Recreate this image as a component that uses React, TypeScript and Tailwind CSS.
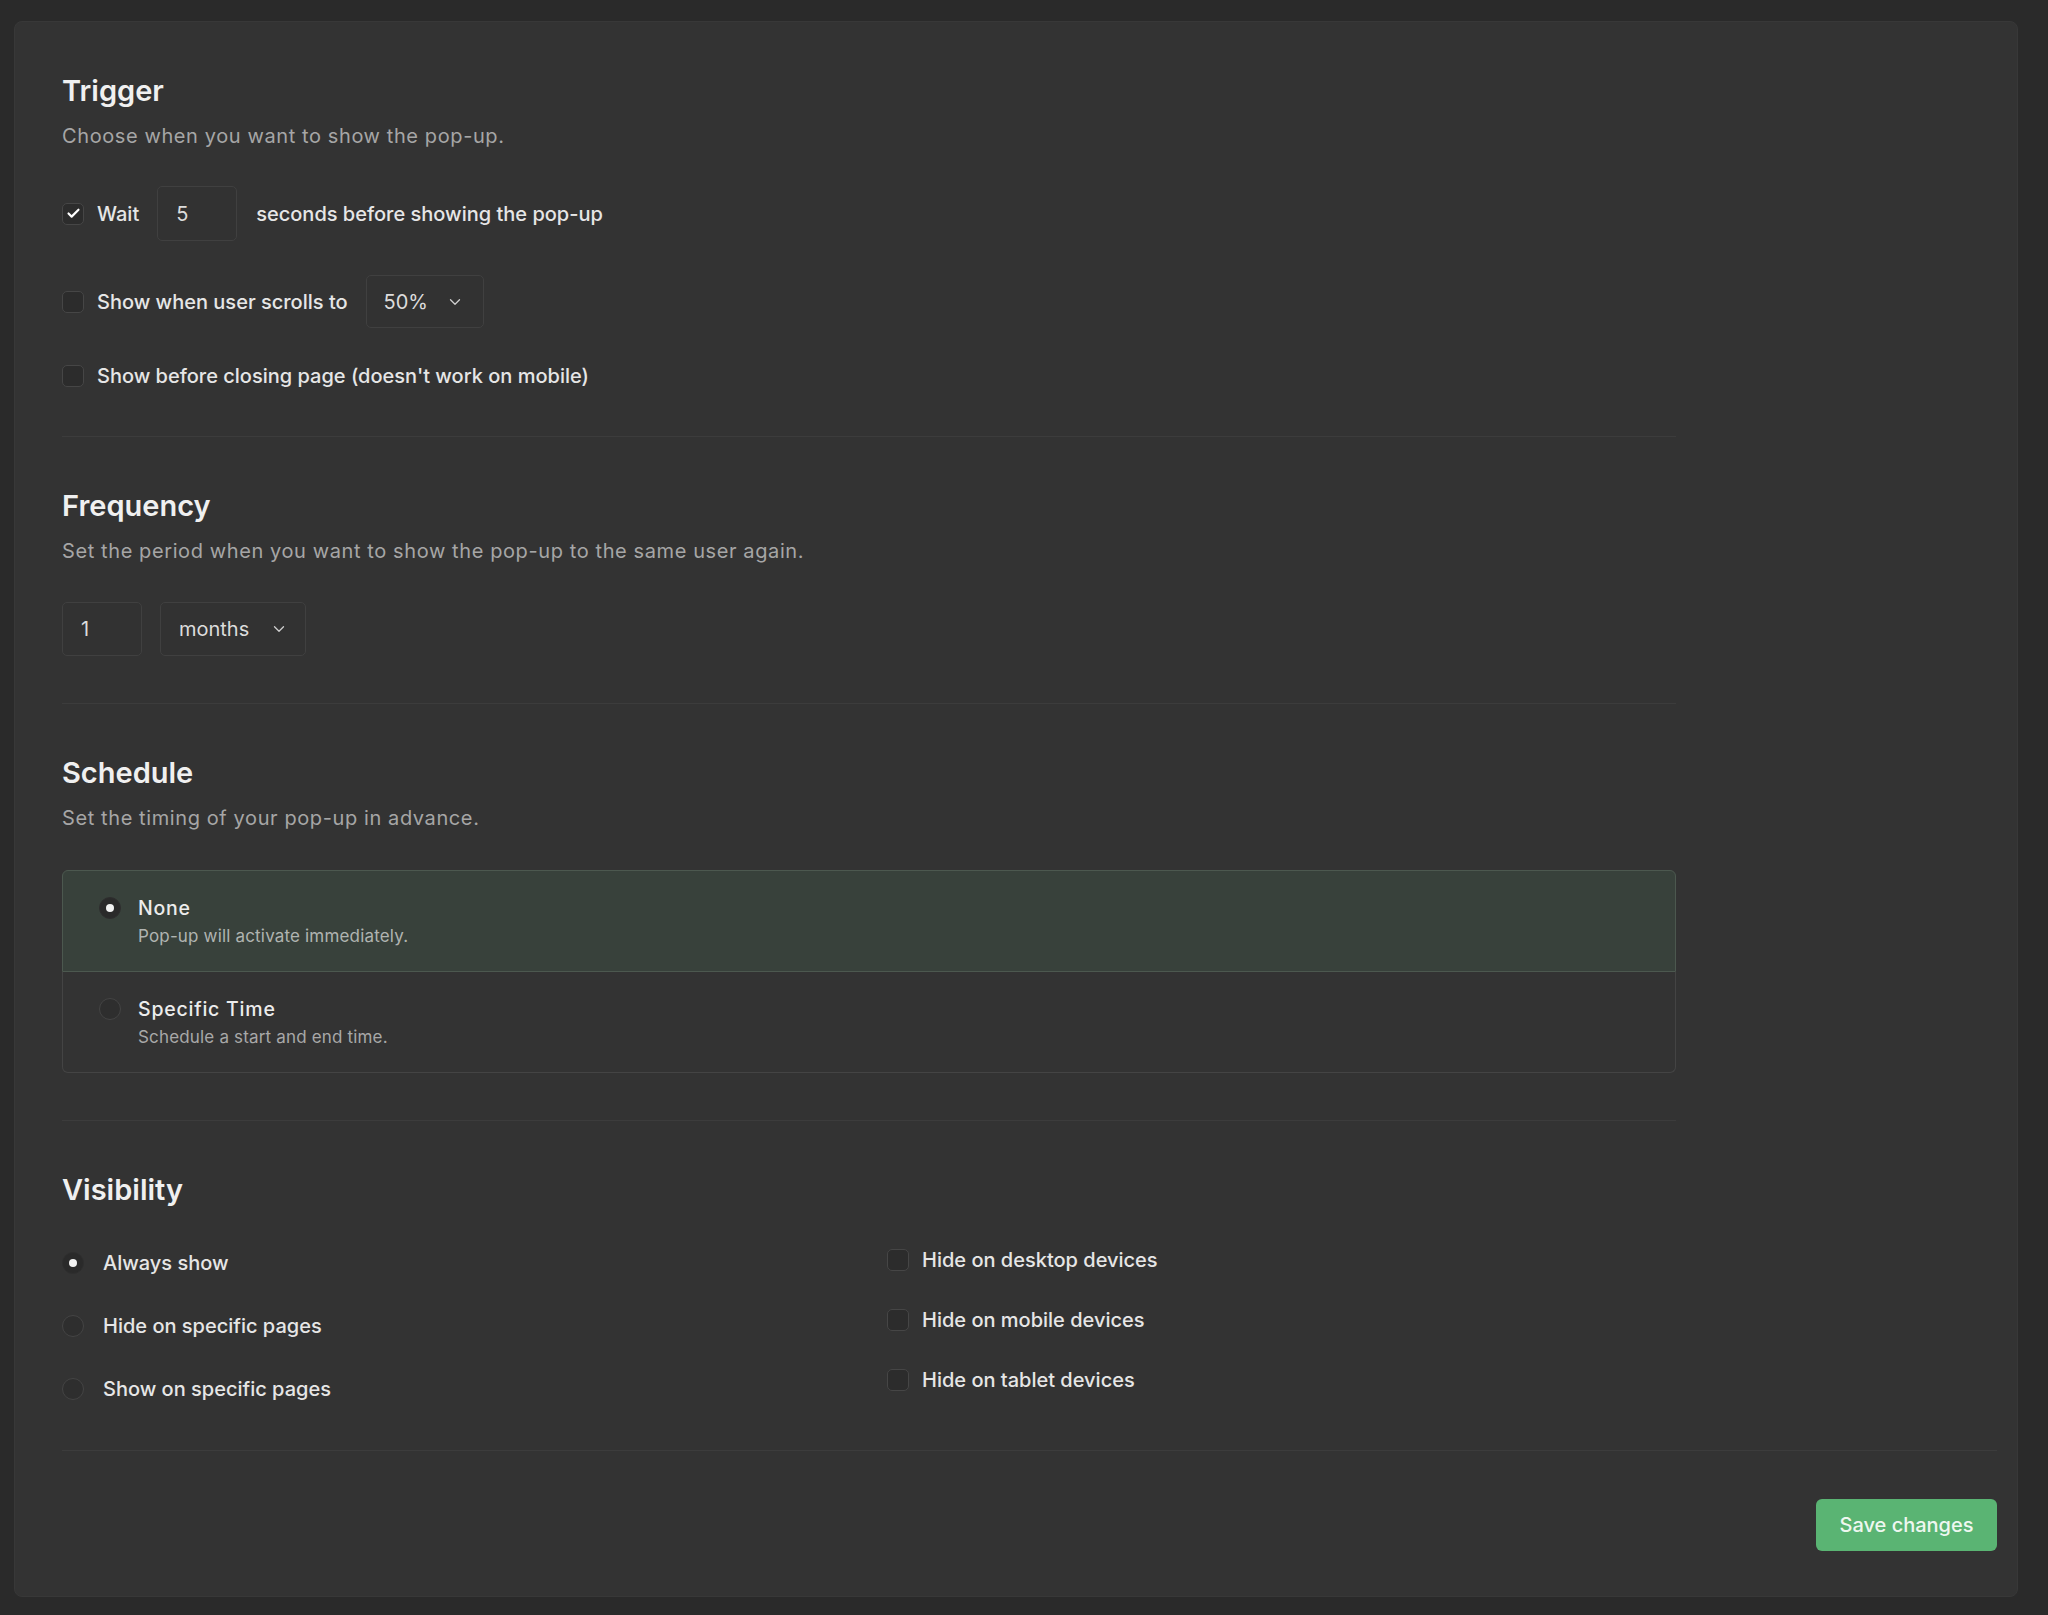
import { Check, ChevronDown } from "lucide-react";

function Checkbox({ checked }: { checked?: boolean }) {
  return (
    <span className="flex h-[22px] w-[22px] shrink-0 items-center justify-center rounded-[5px] border border-[#464646] bg-[#2c2c2c]">
      {checked && <Check size={15} strokeWidth={3.4} className="text-white" />}
    </span>
  );
}

function Radio({ checked }: { checked?: boolean }) {
  return (
    <span
      className={
        checked
          ? "flex h-[22px] w-[22px] shrink-0 items-center justify-center rounded-full border border-[#2e2e2e] bg-[#2a2a2a]"
          : "flex h-[22px] w-[22px] shrink-0 items-center justify-center rounded-full border border-[#444444] bg-[#2e2e2e]"
      }
    >
      {checked && <span className="h-[8px] w-[8px] rounded-full bg-[#f2f2f2]" />}
    </span>
  );
}

function SectionHead({ title, desc }: { title: string; desc?: string }) {
  return (
    <>
      <h2 className="text-[29px] leading-[36px] font-semibold text-[#f0f0f0]">{title}</h2>
      {desc && (
        <p className="mt-[13px] text-[20px] leading-[28px] tracking-[0.03em] text-[#a6a6a6]">{desc}</p>
      )}
    </>
  );
}

export default function App() {
  return (
    <div className="min-h-[1615px] bg-[#2a2a2a] pt-[21px] pr-[30px] pb-[18px] pl-[14px] font-['Inter',sans-serif] antialiased">
      <div className="flex flex-col rounded-[8px] border border-[#383838] bg-[#333333] pl-[47px] pr-[20px]">
        <div className="max-w-[1614px]">
          {/* Trigger */}
          <section className="border-b border-[#3c3c3c] pt-[51px] pb-[46px]">
            <SectionHead title="Trigger" desc="Choose when you want to show the pop-up." />
            <div className="mt-[36px] flex flex-col gap-[34px] text-[20px] leading-[28px] font-medium text-[#e6e6e6]">
              <div className="flex items-center">
                <Checkbox checked />
                <span className="ml-[13px]">Wait</span>
                <div className="ml-[18px] flex h-[55px] w-[80px] items-center rounded-[5px] border border-[#404040] bg-[#323232] pl-[18px] text-[20px] font-normal text-[#dcdcdc]">
                  5
                </div>
                <span className="ml-[19px]">seconds before showing the pop-up</span>
              </div>
              <div className="flex items-center">
                <Checkbox />
                <span className="ml-[13px]">Show when user scrolls to</span>
                <div className="ml-[18px] flex h-[53px] w-[118px] items-center justify-between rounded-[5px] border border-[#404040] bg-[#323232] pr-[19px] pl-[17px] text-[20px] font-normal text-[#dcdcdc]">
                  <span>50%</span>
                  <ChevronDown size={18} strokeWidth={1.75} className="text-[#cfcfcf]" />
                </div>
              </div>
              <div className="flex items-center">
                <Checkbox />
                <span className="ml-[13px]">Show before closing page (doesn't work on mobile)</span>
              </div>
            </div>
          </section>

          {/* Frequency */}
          <section className="border-b border-[#3c3c3c] pt-[51px] pb-[47px]">
            <SectionHead
              title="Frequency"
              desc="Set the period when you want to show the pop-up to the same user again."
            />
            <div className="mt-[37px] flex items-center gap-[18px] text-[20px] text-[#dcdcdc]">
              <div className="flex h-[54px] w-[80px] items-center rounded-[5px] border border-[#404040] bg-[#323232] pl-[18px]">
                1
              </div>
              <div className="flex h-[54px] w-[146px] items-center justify-between rounded-[5px] border border-[#404040] bg-[#323232] pr-[17px] pl-[18px]">
                <span>months</span>
                <ChevronDown size={18} strokeWidth={1.75} className="text-[#cfcfcf]" />
              </div>
            </div>
          </section>

          {/* Schedule */}
          <section className="border-b border-[#3c3c3c] pt-[51px] pb-[47px]">
            <SectionHead title="Schedule" desc="Set the timing of your pop-up in advance." />
            <div className="mt-[38px] flex flex-col">
              <div className="flex h-[102px] items-start rounded-t-[6px] border border-[#4c584f] bg-[#38413b] pt-[24px] pl-[36px]">
                <span className="flex h-[26px] items-center">
                  <Radio checked />
                </span>
                <div className="ml-[17px] flex flex-col">
                  <span className="text-[19.5px] leading-[26px] font-medium tracking-[0.04em] text-[#ececec]">None</span>
                  <span className="mt-[4px] text-[17px] leading-[22px] tracking-[0.01em] text-[#b0b4b1]">
                    Pop-up will activate immediately.
                  </span>
                </div>
              </div>
              <div className="flex h-[101px] items-start rounded-b-[6px] border-x border-b border-[#444444] pt-[24px] pl-[36px]">
                <span className="flex h-[26px] items-center">
                  <Radio />
                </span>
                <div className="ml-[17px] flex flex-col">
                  <span className="text-[19.5px] leading-[26px] font-medium tracking-[0.04em] text-[#ececec]">
                    Specific Time
                  </span>
                  <span className="mt-[4px] text-[17px] leading-[22px] tracking-[0.01em] text-[#a8a8a8]">
                    Schedule a start and end time.
                  </span>
                </div>
              </div>
            </div>
          </section>

          {/* Visibility */}
          <section className="pt-[51px] pb-[47px]">
            <SectionHead title="Visibility" />
            <div className="flex text-[20px] leading-[28px] font-medium text-[#e6e6e6]">
              <div className="mt-[41px] flex w-[825px] flex-col gap-[35px]">
                {[
                  ["Always show", true],
                  ["Hide on specific pages", false],
                  ["Show on specific pages", false],
                ].map(([label, on]) => (
                  <div key={label as string} className="flex items-center">
                    <Radio checked={on as boolean} />
                    <span className="ml-[19px]">{label as string}</span>
                  </div>
                ))}
              </div>
              <div className="mt-[38px] flex flex-col gap-[32px]">
                {["Hide on desktop devices", "Hide on mobile devices", "Hide on tablet devices"].map((l) => (
                  <div key={l} className="flex items-center">
                    <Checkbox />
                    <span className="ml-[13px]">{l}</span>
                  </div>
                ))}
              </div>
            </div>
          </section>
        </div>

        {/* Footer */}
        <div className="flex justify-end border-t border-[#3c3c3c] pt-[48px] pb-[45px]">
          <button className="h-[52px] w-[181px] rounded-[6px] bg-[#5ab473] text-[20px] font-medium text-[#eef7f0]">
            Save changes
          </button>
        </div>
      </div>
    </div>
  );
}
